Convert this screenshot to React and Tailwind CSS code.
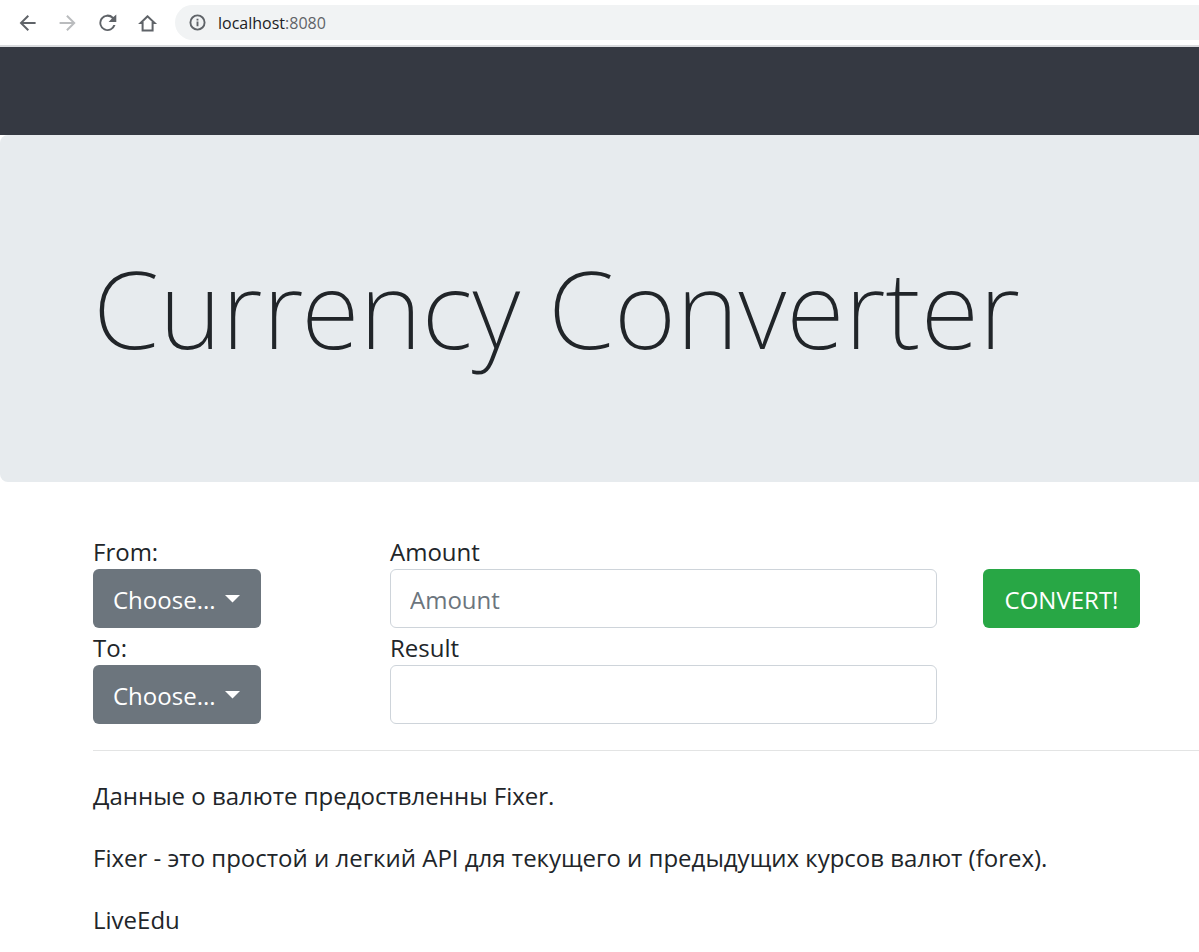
import { useState } from "react";

const currencies = ["USD", "EUR", "GBP", "RUB"];

function NavButton({ label, disabled, children }) {
  return (
    <button
      type="button"
      aria-label={label}
      disabled={disabled}
      className="flex size-10 items-center justify-center text-[#5f6368] disabled:text-[#babcbe]"
    >
      <svg viewBox="0 0 24 24" className="size-6" fill="currentColor" aria-hidden="true">
        {children}
      </svg>
    </button>
  );
}

function BrowserBar() {
  return (
    <header className="flex h-[47px] items-start border-b-2 border-[#d9dbde] bg-white pl-2">
      <nav className="flex h-[45px] items-center" aria-label="Browser">
        <NavButton label="Back">
          <path d="M19.600 11H7.400l5.600-5.600L11.600 4l-8 8 8 8 1.400-1.400L7.400 13h12.200z" />
        </NavButton>
        <NavButton label="Forward" disabled>
          <path d="M3.600 11h12.200l-5.600-5.600L11.600 4l8 8-8 8-1.400-1.400 5.600-5.600H3.600z" />
        </NavButton>
        <NavButton label="Reload">
          <path d="M17.400 6A8.200 8.200 0 1 0 19.500 14h-2.200A6.200 6.200 0 1 1 11.600 5.800c1.700 0 3.200.7 4.300 1.800L12.600 11h7.700V3.400z" />
        </NavButton>
        <NavButton label="Home">
          <path
            d="M11.600 5.300 4.600 12H6.600V19.500H16.600V12H18.600Z"
            fill="none"
            stroke="currentColor"
            strokeWidth="2"
          />
        </NavButton>
      </nav>
      <div className="mt-[5px] ml-[7px] flex h-[35px] flex-1 items-center gap-3 rounded-l-full bg-[#f1f3f4] pl-[14px]">
        <svg viewBox="0 0 18 18" className="size-[17px] shrink-0" fill="none" aria-hidden="true">
          <circle cx="9" cy="9" r="7.500" stroke="#5f6368" strokeWidth="2" />
          <path d="M9 8v5M9 5v2" stroke="#5f6368" strokeWidth="2" />
        </svg>
        <span className="text-base leading-6 text-[#202124]">
          localhost<span className="text-[#5f6368]">:8080</span>
        </span>
      </div>
    </header>
  );
}

function Label({ htmlFor, children }) {
  return (
    <label htmlFor={htmlFor} className="pt-0.5 leading-[35px]">
      {children}
    </label>
  );
}

function CurrencySelect({ id, label }) {
  return (
    <div className="flex flex-col items-start">
      <Label htmlFor={id}>{label}</Label>
      <div className="relative w-[168px]">
        <select
          id={id}
          defaultValue=""
          className="h-[59px] w-full appearance-none rounded-md bg-[#6c757d] pt-px pl-5 text-white"
        >
          <option value="">Choose...</option>
          {currencies.map((code) => (
            <option key={code}>{code}</option>
          ))}
        </select>
        <svg
          viewBox="0 0 15 8"
          className="pointer-events-none absolute top-[26px] right-[21px] h-2 w-[15px]"
          fill="white"
          aria-hidden="true"
        >
          <path d="M0 0h15L7.500 7.500z" />
        </svg>
      </div>
    </div>
  );
}

function Field({ id, label, ...props }) {
  return (
    <div className="flex flex-col">
      <Label htmlFor={id}>{label}</Label>
      <input
        id={id}
        className="h-[59px] w-full rounded-md border border-[#ced4da] bg-white px-[19px] pt-px text-[#495057] placeholder:text-[#6c757d]"
        {...props}
      />
    </div>
  );
}

export default function App() {
  const [amount, setAmount] = useState("");

  return (
    <div className="min-h-screen bg-white font-['Open_Sans','Noto_Sans',sans-serif] text-[#212529]">
      <BrowserBar />
      <div className="h-[88px] bg-[#353942]" />
      <section className="rounded-l-lg bg-[#e7ebee] px-[93px] pt-[104px] pb-[105px]">
        <h1 className="font-['Noto_Sans','Open_Sans',sans-serif] text-[107px] leading-[138px] font-[250] whitespace-nowrap">
          Currency Converter
        </h1>
      </section>
      <main className="pt-[50px] pl-[93px] text-2xl leading-[37px]">
        <form
          className="grid grid-cols-[297fr_593fr_216fr] items-start pb-[26px]"
          onSubmit={(event) => event.preventDefault()}
        >
          <CurrencySelect id="from" label="From:" />
          <div className="pr-[46px]">
            <Field
              id="amount"
              label="Amount"
              placeholder="Amount"
              value={amount}
              onChange={(event) => setAmount(event.target.value)}
            />
          </div>
          <div className="pt-[37px]">
            <button
              type="submit"
              className="h-[59px] w-[157px] rounded-md bg-[#28a745] pt-px text-white"
            >
              CONVERT!
            </button>
          </div>
          <CurrencySelect id="to" label="To:" />
          <div className="pr-[46px]">
            <Field id="result" label="Result" readOnly />
          </div>
        </form>
        <hr className="border-[#e3e4e4]" />
        <div className="flex flex-col gap-[25px] pt-[26px]">
          <p>Данные о валюте предоствленны Fixer.</p>
          <p>Fixer - это простой и легкий API для текущего и предыдущих курсов валют (forex).</p>
          <p>LiveEdu</p>
        </div>
      </main>
    </div>
  );
}
